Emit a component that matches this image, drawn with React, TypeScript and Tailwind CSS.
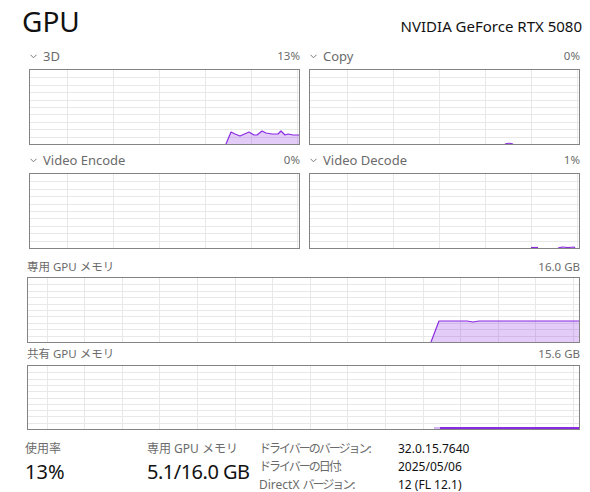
import React from "react";

const PURPLE = "#8a2be2";

function Chevron() {
  return (
    <svg width="7" height="5" viewBox="0 0 7 5" className="mr-[6px] ml-[1px]">
      <path d="M0.5 0.8 L3.5 3.8 L6.5 0.8" fill="none" stroke="#7a7a7a" strokeWidth="1" />
    </svg>
  );
}

type ChartProps = {
  w: number;
  h: number;
  vx0: number;
  vdx: number;
  children?: React.ReactNode;
};

function Chart({ w, h, vx0, vdx, children }: ChartProps) {
  const iw = w - 2;
  const ih = h - 2;
  const vs: number[] = [];
  for (let x = vx0; x < iw; x += vdx) vs.push(Math.round(x) + 0.5);
  const hs: number[] = [];
  for (let i = 1; i < 10; i++) hs.push(Math.round((ih * i) / 10) + 0.5);
  return (
    <div className="border border-[#848484] bg-white" style={{ width: w, height: h }}>
      <svg width={iw} height={ih} viewBox={`0 0 ${iw} ${ih}`} className="block">
        {vs.map((x) => (
          <line key={"v" + x} x1={x} x2={x} y1={0} y2={ih} stroke="#e8e8e8" strokeWidth="1" />
        ))}
        {hs.map((y) => (
          <line key={"h" + y} x1={0} x2={iw} y1={y} y2={y} stroke="#e8e8e8" strokeWidth="1" />
        ))}
        {children}
      </svg>
    </div>
  );
}

function Area({ pts, bottom }: { pts: [number, number][]; bottom: number }) {
  const line = pts.map((p) => p.join(",")).join(" ");
  const first = pts[0];
  const last = pts[pts.length - 1];
  const poly = `${first[0]},${bottom} ${line} ${last[0]},${bottom}`;
  return (
    <g>
      <polygon points={poly} fill={PURPLE} fillOpacity="0.24" />
      <polyline points={line} fill="none" stroke={PURPLE} strokeWidth="1.2" strokeLinejoin="round" />
    </g>
  );
}

function SmallSection({
  label,
  value,
  children,
}: {
  label: string;
  value: string;
  children?: React.ReactNode;
}) {
  return (
    <div>
      <div className="flex items-center justify-between h-[16px]">
        <div className="flex items-center">
          <Chevron />
          <span className="text-[13px] leading-[16px] text-[#6b6b6b]">{label}</span>
        </div>
        <span className="text-[11.5px] leading-[16px] text-[#6b6b6b]">{value}</span>
      </div>
      <div className="mt-[5px]">
        <Chart w={271} h={76} vx0={36.7} vdx={46}>
          {children}
        </Chart>
      </div>
    </div>
  );
}

export default function App() {
  const font = "font-['Noto_Sans','Noto_Sans_CJK_JP',sans-serif]";
  const d3: [number, number][] = [
    [196, 74],
    [201, 62],
    [205, 64],
    [210, 66],
    [219, 62],
    [224, 65],
    [227, 65],
    [232, 61],
    [236, 63],
    [242, 64],
    [248, 64],
    [251, 61],
    [255, 65],
    [258, 64],
    [263, 65],
    [269, 65],
  ];
  const ded: [number, number][] = [
    [403, 64],
    [411, 43],
    [439, 43],
    [445, 44],
    [451, 43],
    [551, 43],
  ];
  return (
    <div className={`w-[590px] h-[492px] bg-white overflow-hidden text-black ${font}`}>
      {/* header */}
      <div className="flex items-baseline justify-between pl-[22px] pr-[8px] pt-[7px]">
        <span className="text-[28px] leading-[29px] text-[#111]">GPU</span>
        <span className="text-[15px] leading-[20px] text-[#111]">NVIDIA GeForce RTX 5080</span>
      </div>

      {/* small charts */}
      <div className="mt-[12px] pl-[29px] pr-[12px] grid grid-cols-[271px_271px] gap-x-[9px] gap-y-[7px]">
        <SmallSection label="3D" value="13%">
          <Area pts={d3} bottom={74} />
        </SmallSection>
        <SmallSection label="Copy" value="0%">
          <path d="M195 74 Q199 72.5 203 74" fill="none" stroke={PURPLE} strokeWidth="1.2" />
        </SmallSection>
        <SmallSection label="Video Encode" value="0%" />
        <SmallSection label="Video Decode" value="1%">
          <line x1={221} x2={228} y1={73.5} y2={73.5} stroke={PURPLE} strokeWidth="1.2" />
          <path d="M248 74 L252 73 L258 73.5 L264 73 L265 74" fill="none" stroke={PURPLE} strokeWidth="1.2" />
        </SmallSection>
      </div>

      {/* dedicated memory */}
      <div className="mt-[10px] pl-[27px] pr-[10px]">
        <div className="flex items-center justify-between h-[16px] text-[11.5px] leading-[16px] text-[#6b6b6b]">
          <span>専用 GPU メモリ</span>
          <span>16.0 GB</span>
        </div>
        <div className="mt-[2px]">
          <Chart w={553} h={66} vx0={18.5} vdx={37.6}>
            <Area pts={ded} bottom={64} />
          </Chart>
        </div>
      </div>

      {/* shared memory */}
      <div className="mt-[3px] pl-[27px] pr-[10px]">
        <div className="flex items-center justify-between h-[16px] text-[11.5px] leading-[16px] text-[#6b6b6b]">
          <span>共有 GPU メモリ</span>
          <span>15.6 GB</span>
        </div>
        <div className="mt-[3px]">
          <Chart w={553} h={65} vx0={18.5} vdx={37.6}>
            <line x1={406} x2={412} y1={62} y2={62} stroke={PURPLE} strokeOpacity="0.35" strokeWidth="2" />
            <line x1={412} x2={551} y1={62} y2={62} stroke={PURPLE} strokeWidth="2" />
          </Chart>
        </div>
      </div>

      {/* bottom stats */}
      <div className="mt-[10px] flex pl-[25px]">
        <div className="w-[122px] flex flex-col">
          <span className="text-[12px] leading-[16px] text-[#6b6b6b] mt-[1px]">使用率</span>
          <span className="text-[20px] leading-[24px] mt-[3px] text-[#111]">13%</span>
        </div>
        <div className="w-[112px] flex flex-col">
          <span className="text-[12px] leading-[16px] text-[#6b6b6b] mt-[1px]">専用 GPU メモリ</span>
          <span className="text-[20px] leading-[24px] mt-[3px] text-[#111] tracking-[-0.5px]">5.1/16.0 GB</span>
        </div>
        <div className="grid grid-cols-[139px_auto] text-[12px] leading-[18px]">
          <span className="text-[#6b6b6b] tracking-[-2px]">ドライバーのバージョン:</span>
          <span className="text-[#111]">32.0.15.7640</span>
          <span className="text-[#6b6b6b] tracking-[-2px]">ドライバーの日付:</span>
          <span className="text-[#111]">2025/05/06</span>
          <span className="text-[#6b6b6b]">
            DirectX <span className="tracking-[-2px]">バージョン:</span>
          </span>
          <span className="text-[#111]">12 (FL 12.1)</span>
        </div>
      </div>
    </div>
  );
}
